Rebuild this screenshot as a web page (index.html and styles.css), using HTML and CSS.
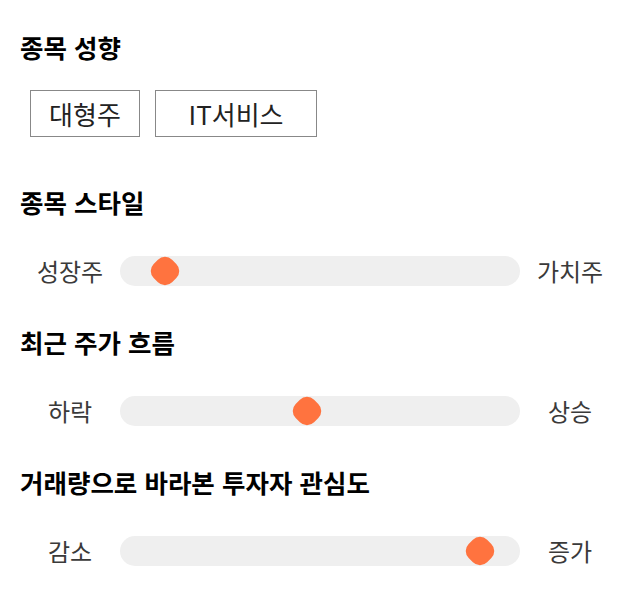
FILE: index.html
```html
<!DOCTYPE html>
<html lang="ko">
<head>
    <meta charset="UTF-8">
    <meta name="viewport" content="width=device-width, initial-scale=1.0">
    <title>종목 성향</title>
    <link rel="stylesheet" href="styles.css">
</head>
<body>
    <div class="section section-tags">
        <h2 class="title">종목 성향</h2>
        <div class="tags">
            <span class="tag">대형주</span>
            <span class="tag tag-wide">IT서비스</span>
        </div>
    </div>

    <div class="section">
        <h2 class="title">종목 스타일</h2>
        <div class="scale">
            <span class="scale-label">성장주</span>
            <div class="track"><span class="thumb" style="left: 11.25%;"></span></div>
            <span class="scale-label">가치주</span>
        </div>
    </div>

    <div class="section">
        <h2 class="title">최근 주가 흐름</h2>
        <div class="scale">
            <span class="scale-label">하락</span>
            <div class="track"><span class="thumb" style="left: 46.75%;"></span></div>
            <span class="scale-label">상승</span>
        </div>
    </div>

    <div class="section">
        <h2 class="title">거래량으로 바라본 투자자 관심도</h2>
        <div class="scale">
            <span class="scale-label">감소</span>
            <div class="track"><span class="thumb" style="left: 89.9%;"></span></div>
            <span class="scale-label">증가</span>
        </div>
    </div>
</body>
</html>
```

FILE: styles.css
```css
body {
    margin: 0;
    padding: 32px 20px 20px;
    font-family: "Noto Sans CJK KR", "Noto Sans", sans-serif;
    background-color: #fff;
    color: #111;
}
.section {
    margin-bottom: 41px;
}
.section-tags {
    margin-bottom: 50px;
}
.title {
    margin: 0 0 39px;
    font-size: 25.5px;
    font-weight: bold;
    line-height: 30px;
    color: #000;
}
.section-tags .title {
    margin-bottom: 28px;
}
.tags {
    display: flex;
    gap: 15px;
    padding-left: 10px;
}
.tag {
    display: inline-flex;
    align-items: center;
    justify-content: center;
    width: 110px;
    height: 47px;
    box-sizing: border-box;
    border: 1px solid #888;
    font-size: 26px;
    color: #222;
}
.tag-wide {
    width: 162px;
}
.scale {
    display: flex;
    align-items: center;
    height: 30px;
}
.scale-label {
    width: 100px;
    text-align: center;
    font-size: 24px;
    line-height: 30px;
    color: #3a3a3a;
}
.track {
    position: relative;
    flex: 1;
    height: 30px;
    border-radius: 15px;
    background-color: #efefef;
}
.thumb {
    position: absolute;
    top: 50%;
    width: 26px;
    height: 26px;
    border-radius: 10px;
    background-color: #ff733f;
    transform: translate(-50%, -50%) rotate(45deg);
}
```
